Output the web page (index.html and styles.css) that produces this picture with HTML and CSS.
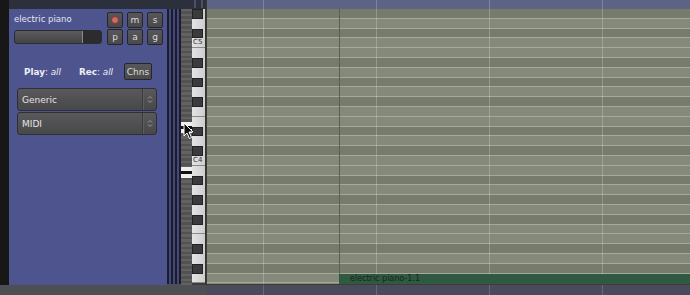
FILE: index.html
```html
<!DOCTYPE html>
<html lang="en">
<head>
  <meta charset="UTF-8" />
  <title>Piano Roll - electric piano</title>
  <link rel="stylesheet" href="styles.css">
</head>
<body>
  <div class="app">
    <div class="body">
      <div class="edge"></div>

      <div class="track">
        <div class="track-top"><span class="grip"></span></div>
        <div class="track-main">

          <!-- instrument panel -->
          <div class="panel">
            <div class="head">
              <div class="name-col">
                <div class="title">electric piano</div>
                <div class="slider"></div>
              </div>
              <div class="btns">
                <button class="btn"><span class="rec-dot"></span></button>
                <button class="btn">m</button>
                <button class="btn">s</button>
                <button class="btn">p</button>
                <button class="btn">a</button>
                <button class="btn">g</button>
              </div>
            </div>

            <div class="play-row">
              <span class="mode play"><b>Play</b>: <i>all</i></span>
              <span class="mode rec"><b>Rec</b>: <i>all</i></span>
              <button class="btn chns">Chns</button>
            </div>

            <div class="combo">
              <span>Generic</span>
              <span class="arrows"><svg width="6" height="9" viewBox="0 0 6 9"><path d="M1 3.5 L3 1.5 L5 3.5 M1 5.5 L3 7.5 L5 5.5" fill="none" stroke="#9a9a9a" stroke-width="1"/></svg></span>
            </div>
            <div class="combo">
              <span>MIDI</span>
              <span class="arrows"><svg width="6" height="9" viewBox="0 0 6 9"><path d="M1 3.5 L3 1.5 L5 3.5 M1 5.5 L3 7.5 L5 5.5" fill="none" stroke="#9a9a9a" stroke-width="1"/></svg></span>
            </div>
          </div>

          <div class="meters"></div>

          <div class="mini">
            <span class="mark first"></span>
            <span class="mark second"></span>
            <svg class="cursor" width="12" height="18" viewBox="0 0 12 18">
              <path d="M1 1 L1 14 L4 11 L6.5 16.5 L8.5 15.5 L6 10 L10 10 Z" fill="#111" stroke="#fff" stroke-width="1"/>
            </svg>
          </div>

          <!-- piano keys -->
          <div class="keys">
            <div class="key b"></div>
            <div class="key"></div>
            <div class="key b"></div>
            <div class="key c">C5</div>
            <div class="key"></div>
            <div class="key b"></div>
            <div class="key"></div>
            <div class="key b"></div>
            <div class="key"></div>
            <div class="key b"></div>
            <div class="key f"></div>
            <div class="key"></div>
            <div class="key b"></div>
            <div class="key"></div>
            <div class="key b"></div>
            <div class="key c">C4</div>
            <div class="key"></div>
            <div class="key b"></div>
            <div class="key"></div>
            <div class="key b"></div>
            <div class="key"></div>
            <div class="key b"></div>
            <div class="key f"></div>
            <div class="key"></div>
            <div class="key b"></div>
            <div class="key"></div>
            <div class="key b"></div>
            <div class="key c"></div>
          </div>
        </div>
      </div>

      <!-- note grid -->
      <div class="editor">
        <div class="ruler"></div>
        <div class="grid">
          <div class="clip">electric piano-1.1</div>
        </div>
      </div>
    </div>

    <div class="footer">
      <div class="foot-left"></div>
      <div class="foot-right"></div>
    </div>
  </div>
</body>
</html>
```

FILE: styles.css
```css
body {
  margin: 0;
  background: #4e4e55;
  font-family: 'DejaVu Sans', Verdana, sans-serif;
}
.app {
  width: 690px;
  height: 295px;
  display: flex;
  flex-direction: column;
  overflow: hidden;
}
.body {
  display: flex;
  height: 285px;
}
.edge {
  width: 9px;
  background: #171717;
}
.track {
  width: 197px;
  display: flex;
  flex-direction: column;
}
.track-top {
  height: 9px;
  background: #2c303d;
  display: flex;
  justify-content: flex-end;
}
.grip {
  width: 5px;
  height: 8px;
  margin-right: 3px;
  border-left: 2px solid #4b5062;
  border-right: 2px solid #4b5062;
}
.track-main {
  flex: 1;
  display: flex;
}

/* instrument panel */
.panel {
  width: 158px;
  background: #4e558e;
  color: #e6e6ee;
  font-size: 8.5px;
}
.head {
  display: flex;
  justify-content: space-between;
  padding: 3px 4px 0 5px;
}
.name-col {
  width: 88px;
}
.title {
  line-height: 14px;
  margin-bottom: 4px;
  color: #e4e4ee;
}
.slider {
  height: 14px;
  box-sizing: border-box;
  border: 1px solid #2b2b30;
  border-radius: 3px;
  background: linear-gradient(to right, transparent 78%, #8a8a8a 78%, #8a8a8a 79.5%, #2c2c2e 79.5%),
              linear-gradient(#5c5c5e, #434345);
}
.btns {
  display: grid;
  grid-template-columns: repeat(3, 16px);
  grid-auto-rows: 16px;
  column-gap: 4px;
  row-gap: 1px;
}
.btn {
  margin: 0;
  padding: 0;
  border: 1px solid #26262a;
  border-radius: 2px;
  background: linear-gradient(#575759, #4a4a4c);
  color: #dcdcdc;
  font-family: inherit;
  font-size: 9px;
  line-height: 12px;
  display: flex;
  align-items: center;
  justify-content: center;
}
.rec-dot {
  width: 8px;
  height: 8px;
  border-radius: 50%;
  background: #d4695f;
  border: 1px solid #7a3a36;
  box-sizing: border-box;
}
.play-row {
  display: flex;
  align-items: center;
  margin: 18px 0 0 15px;
  height: 17px;
}
.mode {
  font-size: 8.8px;
  color: #eeeef6;
}
.mode.play {
  width: 55px;
}
.mode.rec {
  width: 45px;
}
.btn.chns {
  width: 28px;
  height: 17px;
  font-size: 9px;
}
.combo {
  display: flex;
  justify-content: space-between;
  align-items: center;
  width: 140px;
  height: 23px;
  box-sizing: border-box;
  margin: 1px 0 0 8px;
  padding-left: 4px;
  border: 1px solid #2f2f33;
  border-radius: 3px;
  background: linear-gradient(#59595b, #48484a);
  color: #e4e4e4;
  font-size: 9px;
}
.play-row + .combo {
  margin-top: 8px;
}
.arrows {
  width: 13px;
  height: 100%;
  display: flex;
  align-items: center;
  justify-content: center;
  border-left: 1px solid #3a3a3c;
  box-shadow: inset 1px 0 0 #5e5e60;
}

/* level meters */
.meters {
  width: 14px;
  margin-bottom: 1px;
  background: repeating-linear-gradient(to right, #1c1d2c 0 2px, #434878 2px 4px);
}

/* overview strip */
.mini {
  width: 11px;
  position: relative;
  display: flex;
  flex-direction: column;
  background: repeating-linear-gradient(to bottom, #626262 0 2.45px, #525252 2.45px 4.9px);
}
.mark {
  height: 11px;
  background: linear-gradient(to bottom, #eee 0 4px, #111 4px 7px, #eee 7px);
}
.mark.first {
  margin-top: 113px;
}
.mark.second {
  margin-top: 34px;
}
.cursor {
  position: absolute;
  left: 2px;
  top: 113px;
}

/* piano keys */
.keys {
  width: 13px;
  border-right: 1px solid #333;
  background: #3e3e42;
}
.key {
  height: 9.8px;
  box-sizing: border-box;
  background: linear-gradient(to right, #e4e4e4, #cdcdcd);
  color: #333;
  font-size: 7px;
  line-height: 9px;
  padding-left: 1px;
}
.key.b {
  padding: 0;
}
.key.b::before {
  content: "";
  display: block;
  width: 11px;
  height: 100%;
  box-sizing: border-box;
  background: #3b3b3d;
  border: 1px solid #222;
}
.key.c, .key.f {
  border-bottom: 1px solid #8a8a8a;
}

/* note grid */
.editor {
  flex: 1;
  display: flex;
  flex-direction: column;
  border-left: 1px solid #3a3d36;
}
.ruler {
  height: 9px;
  background-color: #5c6385;
  background-image: repeating-linear-gradient(to right, transparent 0 56px, #7d83a3 56px 57px, transparent 57px 113px);
}
.grid {
  flex: 1;
  position: relative;
  border-bottom: 1px solid #3b3e37;
  background-color: #848979;
  background-image:
    linear-gradient(to right, transparent 132px, #5a5f54 132px, #5a5f54 133px, transparent 133px),
    repeating-linear-gradient(to right, transparent 0 56px, rgba(230, 232, 225, 0.28) 56px 57px, transparent 57px 113px),
    repeating-linear-gradient(to bottom, transparent 0 8.8px, #a6aa9e 8.8px 9.8px),
    repeating-linear-gradient(to bottom,
      #767b6c 0 9.8px, #848979 9.8px 19.6px, #767b6c 19.6px 29.4px,
      #848979 29.4px 49px, #767b6c 49px 58.8px, #848979 58.8px 68.6px,
      #767b6c 68.6px 78.4px, #848979 78.4px 88.2px, #767b6c 88.2px 98px,
      #848979 98px 117.6px);
}
.clip {
  position: absolute;
  left: 132px;
  right: 0;
  bottom: 0;
  height: 10px;
  background: #2f5a41;
  color: #16261c;
  font-size: 8px;
  line-height: 10px;
  padding-left: 11px;
}

.footer {
  height: 10px;
  display: flex;
}
.foot-left {
  width: 206px;
  background: #4e4e55;
}
.foot-right {
  flex: 1;
  background-color: #4b4a5c;
  background-image: repeating-linear-gradient(to right, transparent 0 57px, #67667a 57px 58px, transparent 58px 113px);
}
```
